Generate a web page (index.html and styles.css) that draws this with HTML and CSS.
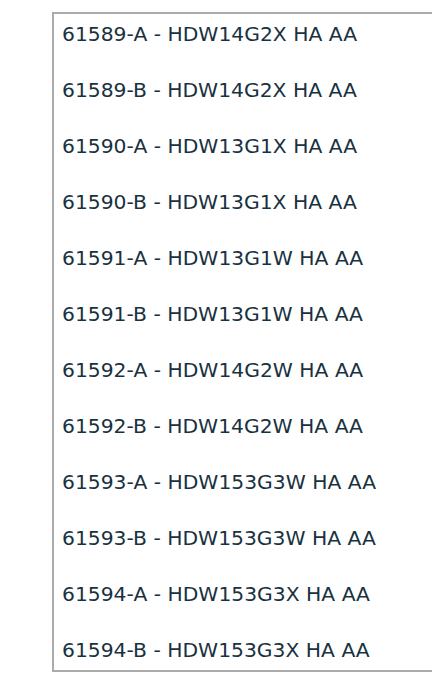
FILE: index.html
```html
<!DOCTYPE html>
<html lang="en">
<head>
  <meta charset="UTF-8" />
  <title>Models</title>
  <link rel="stylesheet" href="styles.css">
</head>
<body>
  <!-- Model list box -->
  <ul class="model-list">
    <li>61589-A - HDW14G2X HA AA</li>
    <li>61589-B - HDW14G2X HA AA</li>
    <li>61590-A - HDW13G1X HA AA</li>
    <li>61590-B - HDW13G1X HA AA</li>
    <li>61591-A - HDW13G1W HA AA</li>
    <li>61591-B - HDW13G1W HA AA</li>
    <li>61592-A - HDW14G2W HA AA</li>
    <li>61592-B - HDW14G2W HA AA</li>
    <li>61593-A - HDW153G3W HA AA</li>
    <li>61593-B - HDW153G3W HA AA</li>
    <li>61594-A - HDW153G3X HA AA</li>
    <li>61594-B - HDW153G3X HA AA</li>
  </ul>
</body>
</html>
```

FILE: styles.css
```css
/* Reset and keep the box from adding scrollbars */
html, body {
  margin: 0;
  padding: 0;
  overflow: hidden;
  background: #fff;
}

body {
  font-family: "DejaVu Sans", Verdana, sans-serif;
}

/* List box container (right edge is cut off by the window) */
.model-list {
  list-style: none;
  margin: 12px 0 0 52px;
  padding: 8px 0 8px 8px;
  border: 2px solid #ababab;
  border-right: none;
  display: flex;
  flex-direction: column;
  gap: 32px;
}

/* Each row of the list */
.model-list li {
  font-size: 20.3px;
  line-height: 24px;
  color: #19323f;
  white-space: nowrap;
}
```
